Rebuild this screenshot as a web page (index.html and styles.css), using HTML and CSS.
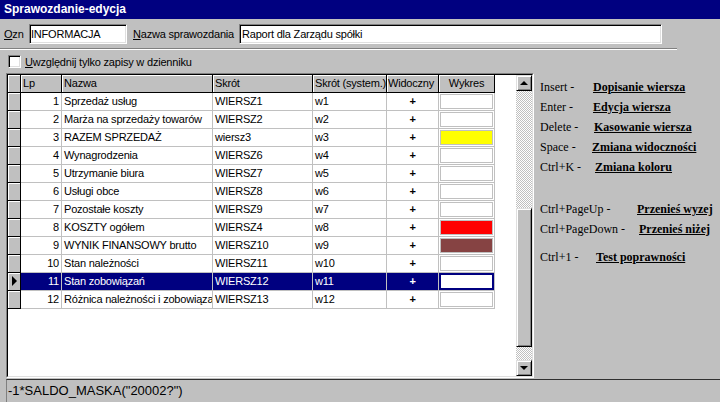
FILE: index.html
```html
<!DOCTYPE html>
<html lang="pl">
<head>
<meta charset="utf-8">
<title>Sprawozdanie-edycja</title>
<link rel="stylesheet" href="styles.css">
</head>
<body>
<div class="window">
  <div class="titlebar">Sprawozdanie-edycja</div>

  <div class="fields">
    <span class="lbl lbl-ozn"><u>O</u>zn</span>
    <div class="input input-ozn">INFORMACJA</div>
    <span class="lbl lbl-nazwa"><u>N</u>azwa sprawozdania</span>
    <div class="input input-nazwa">Raport dla Zarządu spółki</div>
  </div>

  <div class="groove"></div>

  <div class="checkrow">
    <span class="checkbox"></span>
    <span class="lbl"><u>U</u>względnij tylko zapisy w dzienniku</span>
  </div>

  <div class="main">
    <div class="gridframe">
      <div class="gridarea">
        <div class="table">
          <div class="row head">
            <div class="c ind"></div>
            <div class="c">Lp</div>
            <div class="c">Nazwa</div>
            <div class="c">Skrót</div>
            <div class="c">Skrót (system.)</div>
            <div class="c hv">Widoczny</div>
            <div class="c center">Wykres</div>
          </div>
          <div class="row">
            <div class="c ind"></div><div class="c num">1</div><div class="c">Sprzedaż usług</div><div class="c">WIERSZ1</div><div class="c">w1</div><div class="c vis">+</div><div class="c wyk"><div class="sw"></div></div>
          </div>
          <div class="row">
            <div class="c ind"></div><div class="c num">2</div><div class="c">Marża na sprzedaży towarów</div><div class="c">WIERSZ2</div><div class="c">w2</div><div class="c vis">+</div><div class="c wyk"><div class="sw"></div></div>
          </div>
          <div class="row">
            <div class="c ind"></div><div class="c num">3</div><div class="c">RAZEM SPRZEDAŻ</div><div class="c">wiersz3</div><div class="c">w3</div><div class="c vis">+</div><div class="c wyk"><div class="sw yellow"></div></div>
          </div>
          <div class="row">
            <div class="c ind"></div><div class="c num">4</div><div class="c">Wynagrodzenia</div><div class="c">WIERSZ6</div><div class="c">w4</div><div class="c vis">+</div><div class="c wyk"><div class="sw"></div></div>
          </div>
          <div class="row">
            <div class="c ind"></div><div class="c num">5</div><div class="c">Utrzymanie biura</div><div class="c">WIERSZ7</div><div class="c">w5</div><div class="c vis">+</div><div class="c wyk"><div class="sw"></div></div>
          </div>
          <div class="row">
            <div class="c ind"></div><div class="c num">6</div><div class="c">Usługi obce</div><div class="c">WIERSZ8</div><div class="c">w6</div><div class="c vis">+</div><div class="c wyk"><div class="sw"></div></div>
          </div>
          <div class="row">
            <div class="c ind"></div><div class="c num">7</div><div class="c">Pozostałe koszty</div><div class="c">WIERSZ9</div><div class="c">w7</div><div class="c vis">+</div><div class="c wyk"><div class="sw"></div></div>
          </div>
          <div class="row">
            <div class="c ind"></div><div class="c num">8</div><div class="c">KOSZTY ogółem</div><div class="c">WIERSZ4</div><div class="c">w8</div><div class="c vis">+</div><div class="c wyk"><div class="sw red"></div></div>
          </div>
          <div class="row">
            <div class="c ind"></div><div class="c num">9</div><div class="c">WYNIK FINANSOWY brutto</div><div class="c">WIERSZ10</div><div class="c">w9</div><div class="c vis">+</div><div class="c wyk"><div class="sw brown"></div></div>
          </div>
          <div class="row">
            <div class="c ind"></div><div class="c num">10</div><div class="c">Stan należności</div><div class="c">WIERSZ11</div><div class="c">w10</div><div class="c vis">+</div><div class="c wyk"><div class="sw"></div></div>
          </div>
          <div class="row sel">
            <div class="c ind"><span class="ptr"></span></div><div class="c num">11</div><div class="c">Stan zobowiązań</div><div class="c">WIERSZ12</div><div class="c">w11</div><div class="c vis">+</div><div class="c wyk"><div class="sw"></div></div>
          </div>
          <div class="row">
            <div class="c ind"></div><div class="c num">12</div><div class="c">Różnica należności i zobowiązań</div><div class="c">WIERSZ13</div><div class="c">w12</div><div class="c vis">+</div><div class="c wyk"><div class="sw"></div></div>
          </div>
        </div>
        <div class="scrollbar">
          <div class="sb-btn"><span class="arrow-up"></span></div>
          <div class="sb-track sb-track-top"></div>
          <div class="sb-thumb"></div>
          <div class="sb-track sb-track-bot"></div>
          <div class="sb-btn"><span class="arrow-down"></span></div>
        </div>
      </div>
    </div>

    <div class="shortcuts">
      <div class="sc"><span class="key key-s">Insert -</span><span class="act">Dopisanie wiersza</span></div>
      <div class="sc"><span class="key key-s">Enter -</span><span class="act">Edycja wiersza</span></div>
      <div class="sc"><span class="key key-s">Delete -</span><span class="act shift-r">Kasowanie wiersza</span></div>
      <div class="sc"><span class="key key-s">Space -</span><span class="act shift-l">Zmiana widoczności</span></div>
      <div class="sc"><span class="key key-s">Ctrl+K -</span><span class="act shift-r2">Zmiana koloru</span></div>
      <div class="sc group2"><span class="key key-l">Ctrl+PageUp -</span><span class="act">Przenieś wyzej</span></div>
      <div class="sc"><span class="key key-xl">Ctrl+PageDown -</span><span class="act">Przenieś niżej</span></div>
      <div class="sc group3"><span class="key key-m">Ctrl+1 -</span><span class="act">Test poprawności</span></div>
    </div>
  </div>

  <div class="status">-1*SALDO_MASKA("20002?")</div>
</div>
</body>
</html>
```

FILE: styles.css
```css
* { box-sizing: border-box; }
html, body { margin: 0; padding: 0; }
body {
  width: 720px;
  height: 402px;
  overflow: hidden;
  background: #c0c0c0;
  font-family: "Liberation Sans", Arial, sans-serif;
  font-size: 11px;
  color: #000;
}
.window { display: flex; flex-direction: column; height: 402px; }

.titlebar {
  height: 19px;
  background: #000080;
  color: #fff;
  font-weight: bold;
  font-size: 12px;
  line-height: 19px;
  padding-left: 4px;
}

.fields {
  display: flex;
  align-items: center;
  margin-top: 5px;
  height: 20px;
  padding-left: 4px;
}
.lbl { letter-spacing: -0.2px; white-space: nowrap; }
.lbl-ozn { width: 25px; }
.lbl-nazwa { margin-left: 6px; width: 106px; }
.input {
  height: 20px;
  background: #fff;
  border: 1px solid;
  border-color: #808080 #fff #fff #808080;
  box-shadow: inset 1px 1px #000, inset -1px -1px #dfdfdf;
  padding-left: 1px;
  line-height: 18px;
  letter-spacing: -0.2px;
  overflow: hidden;
  white-space: nowrap;
}
.input-ozn { width: 98px; }
.input-nazwa { width: 423px; padding-left: 2px; }

.groove {
  margin-top: 4px;
  width: 677px;
  border-top: 1px solid #808080;
  border-bottom: 1px solid #fff;
}

.checkrow {
  display: flex;
  align-items: center;
  margin-top: 5px;
  padding-left: 8px;
  height: 13px;
}
.checkbox {
  width: 13px;
  height: 13px;
  background: #fff;
  border: 1px solid;
  border-color: #808080 #fff #fff #808080;
  box-shadow: inset 1px 1px #000, inset -1px -1px #dfdfdf;
  margin-right: 4px;
}

.main { display: flex; margin-top: 5px; height: 306px; }

.gridframe {
  margin-left: 6px;
  width: 528px;
  height: 305px;
  border: 1px solid;
  border-color: #808080 #fff #fff #808080;
}
.gridarea {
  display: flex;
  height: 100%;
  background: #fff;
  border: 1px solid;
  border-color: #000 #dfdfdf #dfdfdf #000;
}
.table { flex: 1; }
.row {
  display: grid;
  grid-template-columns: 13px 41px 151px 100px 74px 52px 56px;
  width: 487px;
  height: 18px;
}
.c {
  border-right: 1px solid #c0c0c0;
  border-bottom: 1px solid #c0c0c0;
  padding: 0 2px;
  line-height: 17px;
  white-space: nowrap;
  overflow: hidden;
  letter-spacing: -0.2px;
}
.head .c {
  background: #c0c0c0;
  border-color: #000;
  box-shadow: inset 1px 1px #fff;
}
.head .hv { padding: 0 1px; }
.center { text-align: center; }
.ind {
  background: #c0c0c0;
  border-right-color: #000;
  border-bottom-color: #000;
  box-shadow: inset 1px 1px #fff;
  padding: 0;
}
.num { text-align: right; }
.vis { text-align: center; font-weight: bold; }
.wyk { padding: 1px; }
.sw { height: 100%; border: 1px solid #c0c0c0; background: #fff; }
.sw.yellow { background: #ffff00; }
.sw.red { background: #ff0000; }
.sw.brown { background: #864343; }

.sel .c { background: #000080; color: #fff; }
.sel .ind { background: #c0c0c0; }
.sel .wyk { background: #fff; padding: 0; }
.sel .sw { border: 2px solid #000080; }
.ptr {
  display: block;
  width: 0;
  height: 0;
  margin: 3px 0 0 4px;
  border-left: 5px solid #000;
  border-top: 5px solid transparent;
  border-bottom: 5px solid transparent;
}

.scrollbar { width: 16px; display: flex; flex-direction: column; }
.sb-btn, .sb-thumb {
  background: #c0c0c0;
  border: 1px solid;
  border-color: #dfdfdf #000 #000 #dfdfdf;
  box-shadow: inset 1px 1px #fff, inset -1px -1px #808080;
}
.sb-btn {
  height: 16px;
  display: flex;
  align-items: center;
  justify-content: center;
}
.sb-track {
  background-color: #fff;
  background-image: repeating-conic-gradient(#c0c0c0 0% 25%, #fff 0% 50%);
  background-size: 2px 2px;
}
.sb-track-top { height: 117px; }
.sb-thumb { height: 139px; }
.sb-track-bot { flex: 1; }
.arrow-up, .arrow-down {
  width: 0;
  height: 0;
  border-left: 4px solid transparent;
  border-right: 4px solid transparent;
}
.arrow-up { border-bottom: 4px solid #000; }
.arrow-down { border-top: 4px solid #000; }

.shortcuts {
  margin-left: 6px;
  padding-top: 4px;
  font-family: "Liberation Serif", "Times New Roman", serif;
  font-size: 12px;
}
.sc { display: flex; height: 20px; line-height: 20px; white-space: nowrap; }
.key-s { width: 53px; }
.key-l { width: 97px; }
.key-xl { width: 99px; }
.key-m { width: 56px; }
.act { font-weight: bold; text-decoration: underline; }
.shift-r { margin-left: 1px; }
.shift-l { margin-left: -1px; }
.shift-r2 { margin-left: 2px; }
.group2 { margin-top: 22px; }
.group3 { margin-top: 8px; }

.status {
  height: 23px;
  margin-left: 6px;
  border-top: 1px solid #303030;
  border-left: 1px solid #808080;
  padding-left: 1px;
  font-size: 13px;
  line-height: 22px;
  white-space: nowrap;
}
```
